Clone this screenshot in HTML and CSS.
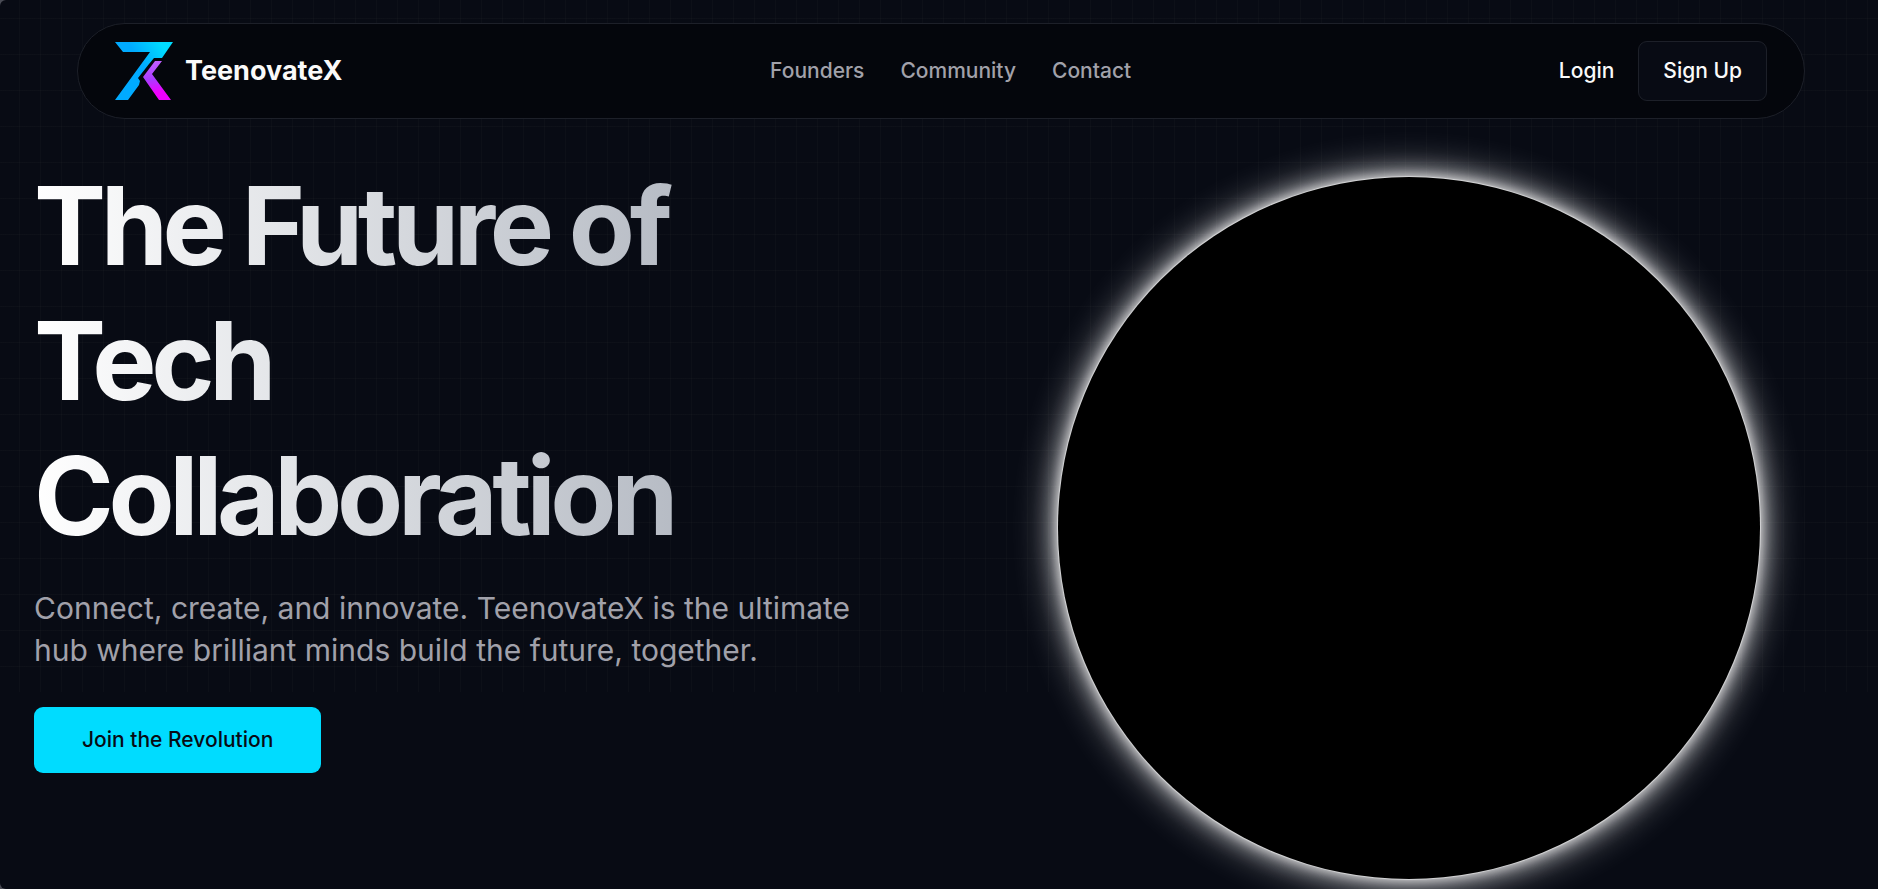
FILE: index.html
```html
<!DOCTYPE html>
<html lang="en">
<head>
    <meta charset="UTF-8">
    <meta name="viewport" content="width=device-width, initial-scale=1.0">
    <title>TeenovateX</title>
    <link rel="stylesheet" href="styles.css">
</head>
<body>
    <div class="page">
        <header class="navbar">
            <a class="brand" href="#">
                <svg class="logo" viewBox="0 0 60 60" aria-hidden="true">
                    <defs>
                        <linearGradient id="blue" x1="0.2" y1="0.5" x2="1" y2="0">
                            <stop offset="0.3" stop-color="#00aaff"/>
                            <stop offset="0.8" stop-color="#00dcff"/>
                        </linearGradient>
                        <linearGradient id="purple" x1="0.5" y1="0" x2="0.6" y2="1">
                            <stop offset="0" stop-color="#c060ff"/>
                            <stop offset="0.45" stop-color="#a93cff"/>
                            <stop offset="0.8" stop-color="#f000ff"/>
                        </linearGradient>
                    </defs>
                    <path fill="url(#blue)" d="M0 1H58L47 17H39L34 23L23 37L25 40L24 44L13 59H0L35 11H8Z"/>
                    <path fill="url(#purple)" d="M40 20H47L37 33L56 59H44L28 36Z"/>
                </svg>
                <span class="brand-name">TeenovateX</span>
            </a>
            <nav class="nav-links">
                <a href="#founders">Founders</a>
                <a href="#community">Community</a>
                <a href="#contact">Contact</a>
            </nav>
            <div class="nav-actions">
                <a class="login" href="#login">Login</a>
                <button class="signup" type="button">Sign Up</button>
            </div>
        </header>

        <main class="hero">
            <section class="hero-text">
                <h1>The Future of Tech Collaboration</h1>
                <p>Connect, create, and innovate. TeenovateX is the ultimate hub where brilliant minds build the future, together.</p>
                <button class="join" type="button">Join the Revolution</button>
            </section>
            <div class="hero-visual">
                <div class="eclipse"></div>
            </div>
        </main>
    </div>
</body>
</html>
```
FILE: styles.css
```css
* {
    box-sizing: border-box;
}
html {
    background-color: #4a4c55;
}
body {
    margin: 0;
    font-family: Inter, "Liberation Sans", sans-serif;
    color: #fafafa;
}
a {
    color: inherit;
    text-decoration: none;
}
button {
    font-family: inherit;
    cursor: pointer;
}
.page {
    min-height: 100vh;
    padding: 23px 0 0 2px;
    border-radius: 6px 0 0 6px;
    background-color: #080b14;
    /* faint grid, only over the upper part of the page */
    background-image:
        linear-gradient(to bottom, transparent 692px, #080b14 692px),
        linear-gradient(to right, rgba(79, 79, 79, 0.08) 1px, transparent 1px),
        linear-gradient(to bottom, rgba(79, 79, 79, 0.08) 1px, transparent 1px);
    background-size: 100% 100%, 21px 36px, 21px 36px;
    background-position: 0 0, 19px 18px, 19px 18px;
    overflow: hidden;
}

/* Navbar */
.navbar {
    display: flex;
    justify-content: space-between;
    align-items: center;
    height: 96px;
    margin: 0 73px 0 75px;
    padding: 0 37px;
    border: 1px solid #1d2029;
    border-radius: 48px;
    background-color: #04060c;
}
.brand {
    display: flex;
    align-items: center;
    gap: 10px;
}
.logo {
    width: 60px;
    height: 60px;
}
.brand-name {
    padding-bottom: 2px;
    font-size: 27px;
    font-weight: 700;
}
.nav-links {
    display: flex;
    gap: 36px;
    padding-bottom: 2px;
    font-size: 21px;
    font-weight: 500;
    color: #a1a1aa;
}
.nav-actions {
    display: flex;
    justify-content: flex-end;
    align-items: center;
    gap: 24px;
    font-size: 21px;
    font-weight: 500;
}
.login {
    padding-bottom: 2px;
}
.signup {
    height: 60px;
    padding: 0 24px 2px;
    border: 1px solid #1d2029;
    border-radius: 9px;
    background-color: #080b14;
    color: #fafafa;
    font-size: 21px;
    font-weight: 500;
}

/* Hero */
.hero {
    display: grid;
    grid-template-columns: 1fr 1fr;
}
.hero-text {
    padding: 39px 32px 0;
}
.hero-text h1 {
    margin: 0 0 24px;
    font-size: 108px;
    line-height: 135px;
    font-weight: 700;
    letter-spacing: -0.05em;
    background: linear-gradient(to right, #fff, #9ca3af);
    background-clip: text;
    -webkit-background-clip: text;
    color: transparent;
}
.hero-text p {
    margin: 0 0 36px;
    font-size: 30px;
    line-height: 42px;
    color: #a1a1aa;
}
.join {
    height: 66px;
    padding: 0 48px 2px;
    border: none;
    border-radius: 9px;
    background-color: #00dcff;
    color: #080b14;
    font-size: 21px;
    font-weight: 500;
}
.hero-visual {
    display: flex;
    justify-content: center;
    padding-top: 58px;
}
.eclipse {
    width: 75%;
    max-width: 702px;
    aspect-ratio: 1;
    align-self: flex-start;
    border-radius: 50%;
    background-color: #000;
    box-shadow:
        0 0 1px 1px rgba(255, 255, 255, 0.5),
        0 0 8px 3px rgba(255, 255, 255, 0.5),
        0 0 18px 8px rgba(255, 255, 255, 0.4),
        0 0 32px 16px rgba(255, 255, 255, 0.28);
}
```
